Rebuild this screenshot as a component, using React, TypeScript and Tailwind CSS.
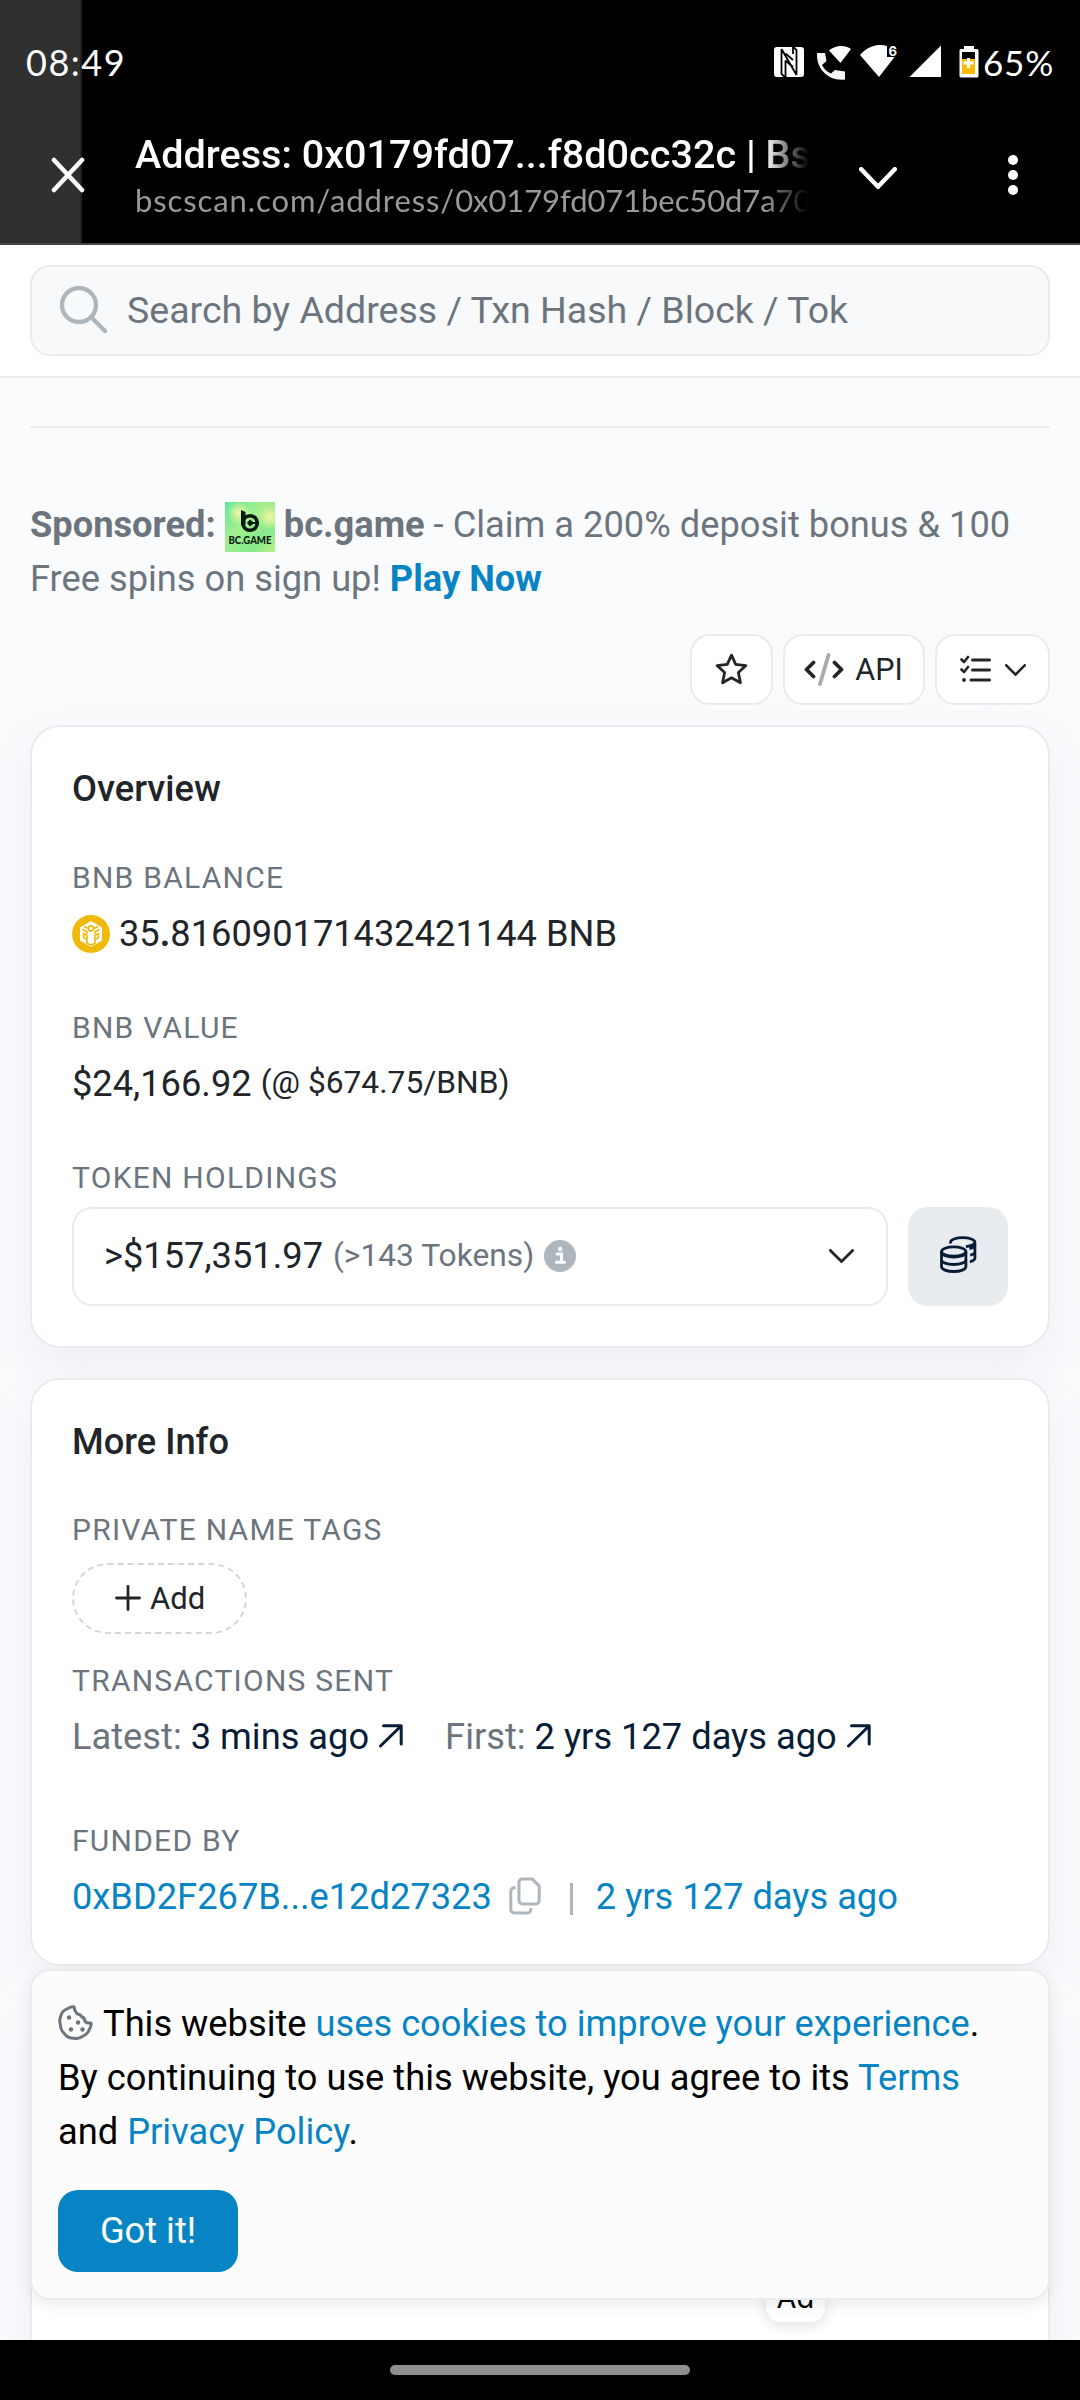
import type { ReactNode } from "react";

function Chevron({ w, h, sw }: { w: number; h: number; sw: number }) {
  return (
    <svg width={w} height={h} viewBox={`0 0 ${w} ${h}`} fill="none" stroke="currentColor" strokeWidth={sw} strokeLinecap="round" strokeLinejoin="round">
      <path d={`M${sw / 2} ${sw / 2}L${w / 2} ${h - sw / 2}L${w - sw / 2} ${sw / 2}`} />
    </svg>
  );
}

function StatusIcons() {
  return (
    <svg width="212" height="42" viewBox="770 42 212 42" className="shrink-0">
      <rect x="774" y="48" width="30" height="30" rx="3" fill="#fff" />
      <path d="M781.500 50V75L784.500 78M796.500 76V51L793.500 48M781.500 50L796.500 76M785.500 61.500L793 68M785.500 61.500V78M793 55V48M785.500 54.500L793 61" fill="none" stroke="#000" strokeWidth="1.800" />
      <path d="M817 54h8l1.500 8-4.500 4c2 4 5 7 9 8.500l4-3.500 10 1.500v8c-16 2-29-10-28-26.500z" fill="#f4f4f4" />
      <path d="M829 51.500C835 46 845 45.500 851 50L840.500 64z" fill="#fff" />
      <path d="M860 56C869 45.500 880 44.800 887 47V58H894.500L879 78z" fill="#fff" />
      <text x="888.500" y="56.500" fill="#fff" fontFamily="Inter" fontWeight="700" fontSize="13">6</text>
      <path d="M909.500 78L941 46.500V78z" fill="#fff" />
      <path d="M964 47h10v3h3q1.500 0 1.500 1.500V77q0 1.500-1.500 1.500H961q-1.500 0-1.500-1.500V51.500q0-1.500 1.500-1.500h3z" fill="#fff" />
      <path d="M962 53h13v22h-13z" fill="#fbbc04" />
      <path d="M962 53h13v7h-13z" fill="#000" />
      <path d="M968.500 59v10M963.500 64h10" stroke="#fff" strokeWidth="3.200" />
    </svg>
  );
}

function BcGame() {
  return (
    <svg width="50" height="50" viewBox="0 0 50 50" className="mt-[4px] shrink-0">
      <defs>
        <linearGradient id="bcg" x1="0" y1="0" x2="1" y2="1">
          <stop offset="0" stopColor="#5fe89a" />
          <stop offset=".4" stopColor="#a3ee8e" />
          <stop offset=".75" stopColor="#86ea8c" />
          <stop offset="1" stopColor="#c0f08a" />
        </linearGradient>
        <radialGradient id="glow">
          <stop offset="0" stopColor="#f4f6a2" />
          <stop offset="1" stopColor="#f4f6a2" stopOpacity="0" />
        </radialGradient>
      </defs>
      <rect width="50" height="50" fill="url(#bcg)" />
      <circle cx="14" cy="11" r="12" fill="url(#glow)" />
      <circle cx="45" cy="15" r="13" fill="url(#glow)" />
      <path d="M16 8l4.500 2v13H16z" fill="#0b1a10" />
      <circle cx="25" cy="21" r="7.300" fill="none" stroke="#0b1a10" strokeWidth="3.600" />
      <path d="M25 17.500l3 2.500h4v2h-4l-3 2.500-3-3.500z" fill="#0b1a10" />
      <text x="25" y="41.500" textAnchor="middle" textLength="43" lengthAdjust="spacingAndGlyphs" fill="#0b1a10" fontFamily="Lato" fontWeight="900" fontSize="10.500">BC.GAME</text>
    </svg>
  );
}

function BnbIcon() {
  return (
    <svg width="38" height="38" viewBox="0 0 38 38" className="shrink-0">
      <circle cx="19" cy="19" r="19" fill="#f0b90b" />
      <path d="M19 6L30 12.500V25.500L19 32L8 25.500V12.500z" fill="#fff" />
      <g fill="none" stroke="#f0b90b" strokeWidth="1.600" strokeLinejoin="round">
        <circle cx="19" cy="13.500" r="2.600" />
        <path d="M12 11.500L16.500 13.500M26 11.500L21.500 13.500M10.500 14L15 17V19M27.500 14L23 17V19" />
        <path d="M11.500 18.500l3.500 2v4l-3.500-2zM26.500 18.500l-3.500 2v4l3.500-2zM15 25v4M23 25v4M15.500 28.500l3.500 1.500 3.500-1.500" />
      </g>
    </svg>
  );
}

function ArrowUpRight() {
  return (
    <svg width="24" height="24" viewBox="0 0 24 24" fill="none" stroke="currentColor" strokeWidth="3" strokeLinecap="round" strokeLinejoin="round">
      <path d="M1.500 22L22 2M4.500 1.800H22.200V20" />
    </svg>
  );
}

function Coins() {
  return (
    <svg width="37" height="38" viewBox="0 0 37 38" fill="none" stroke="#081d35" strokeWidth="2.800">
      <ellipse cx="13.700" cy="15.500" rx="12.200" ry="4.600" />
      <path d="M1.500 15.500v15c0 2.900 5.400 5 12.200 5s12.200-2.100 12.200-5v-15" />
      <path d="M1.500 16.500c0 2.500 5.400 4.500 12.200 4.500s12.200-2 12.200-4.500M1.500 24c0 2.500 5.400 4.500 12.200 4.500s12.200-2 12.200-4.500" />
      <path d="M10.500 7.500V6.300c0-2.700 5.400-4.700 12.200-4.700s12.200 2 12.200 4.700v16c0 1.500-2 2.700-5 3.500M34.900 6.300c0 2.200-3.800 3.900-9 4.300M34.900 10c-.5 1.200-2.500 2-5.500 2.600M34.900 16.500c-.5 1.200-2.200 2-4.700 2.600" />
    </svg>
  );
}

function CopyIcon() {
  return (
    <svg width="32" height="38" viewBox="0 0 32 38" fill="none" stroke="#adb5bd" strokeWidth="3" strokeLinejoin="round">
      <path d="M13.500 1.900h9.500l7.200 7v14.500a3.500 3.500 0 0 1-3.500 3.500H13.500a3.500 3.500 0 0 1-3.500-3.500V5.400a3.500 3.500 0 0 1 3.500-3.500z" />
      <path d="M6.500 10.800H5.300a3.500 3.500 0 0 0-3.500 3.500v18.200a3.500 3.500 0 0 0 3.500 3.500h13a3.500 3.500 0 0 0 3.500-3.500v-1.500" />
    </svg>
  );
}

function Cookie() {
  return (
    <svg width="35" height="35" viewBox="0 0 35 35" className="-mt-[4px] shrink-0" fill="none" stroke="#6c757d" strokeWidth="3" strokeLinejoin="round">
      <path d="M16 1.800Q13 1.500 10.300 3.200L6.500 5.300Q4.300 6.600 3.500 9L2.200 13Q1.500 15.500 2 18L2.900 23Q3.500 25.500 5.300 27.500L8.500 31Q10.500 32.700 13 33L18 33.500Q20.500 33.600 22.500 32.500L27 30Q29.300 28.700 30.300 26.500L32.300 22.500Q33.200 20.500 33 18Q28.500 18.500 27 16.500Q26.800 13 24 12Q22 9 19 8.700Q16.500 6 16 1.800z" />
      <g fill="#6c757d" stroke="none">
        <circle cx="11" cy="12.500" r="2.200" />
        <circle cx="20" cy="17.500" r="2.200" />
        <circle cx="13" cy="24.500" r="2.200" />
        <circle cx="24.500" cy="24.500" r="2.200" />
      </g>
    </svg>
  );
}

function Label({ children, mt }: { children: ReactNode; mt: string }) {
  return <div className={`${mt} h-[45px] text-[30px] leading-[45px] tracking-[1.25px] text-[#6c757d]`}>{children}</div>;
}

const btn = "flex h-[71px] items-center justify-center rounded-[20px] border-2 border-[#e9ecef] bg-white";

export default function App() {
  return (
    <div className="relative flex h-[2400px] w-[1080px] flex-col overflow-hidden bg-[#fafbfd] font-['Roboto',sans-serif] text-[36.25px] leading-[54px] text-[#212529]">
      <header className="h-[245px] shrink-0 border-b-2 border-[#454345] bg-[linear-gradient(90deg,#303030_0,#303030_80px,#222_80px,#222_82px,#000_82px)] text-white">
        <div className="flex h-[123px] items-center justify-between pl-[26px] pr-[26px]">
          <span className="font-['Lato',sans-serif] text-[36px] tracking-[1.5px]">08:49</span>
          <span className="flex items-center">
            <StatusIcons />
            <span className="ml-[1px] font-['Lato',sans-serif] text-[35px] tracking-[0.8px]">65%</span>
          </span>
        </div>
        <div className="flex h-[120px] pl-[51px]">
          <svg width="34" height="36" viewBox="0 0 34 36" className="mt-[34px]" stroke="#fff" strokeWidth="4.500" strokeLinecap="round">
            <path d="M3 3L31 33M31 3L3 33" />
          </svg>
          <div className="ml-[50px] mt-[5px] w-[674px] whitespace-nowrap [mask-image:linear-gradient(90deg,#000_630px,transparent_674px)]">
            <div className="text-[39.6px] font-medium leading-[54px]">Address: 0x0179fd07...f8d0cc32c | Bs</div>
            <div className="font-['Lato',sans-serif] text-[31px] leading-[37px] text-[#999]"><span className="tracking-[0.9px]">bscscan.com/address/</span><span className="tracking-[-0.1px]">0x0179fd071bec50d7a70</span></div>
          </div>
          <span className="ml-[50px] mt-[44px]"><Chevron w={38} h={22} sw={4.5} /></span>
          <div className="ml-[111px] mt-[32px] flex flex-col gap-[5px]">
            <i className="size-[10px] rounded-full bg-white" />
            <i className="size-[10px] rounded-full bg-white" />
            <i className="size-[10px] rounded-full bg-white" />
          </div>
        </div>
      </header>

      <div className="h-[133px] shrink-0 border-b-2 border-[#e9ecef] bg-white px-[30px] pt-5">
        <div className="flex h-[91px] items-center rounded-[20px] border-2 border-[#e9ecef] bg-[#f8f9fa] pl-[28px] text-[#6c757d]">
          <svg width="48" height="48" viewBox="0 0 48 48" fill="none" stroke="#adb5bd" strokeWidth="4.300" strokeLinecap="round" className="-mt-[2px]">
            <circle cx="19" cy="19" r="17" />
            <path d="M31.500 31.500L45 45" />
          </svg>
          <span className="-mt-[2px] ml-[19px] text-[37.5px]">Search by Address / Txn Hash / Block / Tok</span>
        </div>
      </div>

      <main className="px-[30px] pt-12">
        <hr className="h-[2px] border-0 bg-[#e9ecef]" />
        <div className="mt-[70px] text-[#6c757d]">
          <div className="flex h-[54px] items-center whitespace-pre">
            <b>Sponsored: </b><BcGame /><b> bc.game</b> - Claim a 200% deposit bonus &amp; 100
          </div>
          <div className="h-[54px]">Free spins on sign up! <b className="text-[#0784c3]">Play Now</b></div>
        </div>
        <div className="mt-[28px] flex justify-end gap-[10px] text-[30.500px]">
          <div className={`${btn} w-[83px]`}>
            <svg width="33" height="33" viewBox="0 0 33 33" fill="none" stroke="#212529" strokeWidth="2.800" strokeLinejoin="round">
              <path d="M16.500 2.200l4.200 9.200 10.200 1.200-7.500 7 2 10.200-8.900-5-8.900 5 2-10.200-7.500-7 10.200-1.200z" />
            </svg>
          </div>
          <div className={`${btn} w-[142px] gap-[11px] pr-[1px]`}>
            <svg width="40" height="33" viewBox="0 0 40 33" fill="none" stroke="#212529" strokeWidth="3.800" strokeLinecap="round" strokeLinejoin="round">
              <path d="M9.500 9.500L2.500 16.500l7 7M30.500 9.500l7 7-7 7" />
              <path d="M24.500 2L16 31" stroke="#a9aaac" />
            </svg>
            <span>API</span>
          </div>
          <div className={`${btn} w-[115px] gap-[14px]`}>
            <svg width="31" height="28" viewBox="0 0 31 28" fill="none" stroke="#212529" strokeWidth="3" strokeLinecap="round" strokeLinejoin="round" className="-mt-[2px]">
              <path d="M12.500 5H29.500M12.500 15H29.500M11 25H29.500" />
              <path d="M1.500 4.500L4 7l4-5M1.500 14.500L4 17l4-5" strokeWidth="2.600" />
              <circle cx="4" cy="25" r="1.900" fill="#212529" stroke="none" />
            </svg>
            <Chevron w={21} h={12} sw={2.6} />
          </div>
        </div>

        <section className="mt-5 h-[623px] rounded-[30px] border-2 border-[#e9ecef] bg-white px-10 pt-[35px] shadow-[0_20px_48px_rgba(189,197,209,0.2)]">
          <h2 className="h-[54px] font-medium">Overview</h2>
          <Label mt="mt-[39px]">BNB BALANCE</Label>
          <div className="mt-[7px] flex h-[54px] items-center gap-[9px]">
            <BnbIcon />
            <span>35<b>.</b>816090171432421144 BNB</span>
          </div>
          <Label mt="mt-[44px]">BNB VALUE</Label>
          <div className="mt-[7px] flex h-[54px] gap-[9px]">
            <span>$24,166.92</span>
            <span className="text-[31.72px] leading-[52px]">(@ $674.75/BNB)</span>
          </div>
          <Label mt="mt-[44px]">TOKEN HOLDINGS</Label>
          <div className="mt-[7px] flex h-[99px] gap-5">
            <div className="flex w-[816px] items-center rounded-[20px] border-2 border-[#e9ecef] pb-[2px] pl-[30px] pr-[32px]">
              <span>&gt;$157,351.97</span>
              <span className="ml-[10px] text-[31.72px] text-[#6c757d]">(&gt;143 Tokens)</span>
              <svg width="32" height="32" viewBox="0 0 32 32" className="ml-[10px]">
                <circle cx="16" cy="16" r="16" fill="#adb5bd" />
                <path d="M13 14h4.500v8M12.500 22.300h8" stroke="#fff" strokeWidth="3" fill="none" strokeLinecap="round" />
                <circle cx="16.200" cy="9" r="2.200" fill="#fff" />
              </svg>
              <span className="ml-auto"><Chevron w={25} h={14} sw={2.8} /></span>
            </div>
            <div className="flex w-[100px] items-center justify-center rounded-[20px] bg-[#e9ecef] pb-[4px]"><Coins /></div>
          </div>
        </section>

        <section className="mt-[30px] h-[588px] rounded-[30px] border-2 border-[#e9ecef] bg-white px-10 pt-[35px] shadow-[0_20px_48px_rgba(189,197,209,0.2)]">
          <h2 className="h-[54px] font-medium">More Info</h2>
          <Label mt="mt-[38px]">PRIVATE NAME TAGS</Label>
          <div className="mt-[11px] flex h-[71px] w-[175px] items-center gap-[9px] rounded-full border-2 border-dashed border-[#d3d5d7] pl-[41px] text-[31px]">
            <svg width="26" height="26" viewBox="0 0 26 26" stroke="#212529" strokeWidth="2.800" strokeLinecap="round" className="-mt-[2px]"><path d="M13 1.500V24.500M1.500 13H24.500" /></svg>
            Add
          </div>
          <Label mt="mt-[24px]">TRANSACTIONS SENT</Label>
          <div className="mt-[7px] flex h-[54px] items-center text-[#6c757d]">
            Latest:<span className="ml-[9px] text-[#081d35]">3 mins ago</span>
            <span className="-mt-[3px] ml-[10px] text-[#081d35]"><ArrowUpRight /></span>
            <span className="ml-[42px]">First:</span><span className="ml-[9px] text-[#081d35]">2 yrs 127 days ago</span>
            <span className="-mt-[3px] ml-[10px] text-[#081d35]"><ArrowUpRight /></span>
          </div>
          <Label mt="mt-[54px]">FUNDED BY</Label>
          <div className="mt-[7px] flex h-[54px] items-center text-[#0784c3]">
            <span>0xBD2F267B...e12d27323</span>
            <span className="-mt-[3px] ml-[17px]"><CopyIcon /></span>
            <span className="mt-[4px] ml-[29px] h-[32px] w-[3px] bg-[#adb5bd]" />
            <span className="ml-[23px]">2 yrs 127 days ago</span>
          </div>
        </section>

        <section className="mt-[30px] flex h-[500px] justify-end rounded-[30px] border-2 border-[#e9ecef] bg-white pr-[223px] pt-[272px] shadow-[0_20px_48px_rgba(189,197,209,0.2)]">
          <span className="flex h-[52px] w-[59px] items-center justify-center rounded-[14px] bg-white pt-[4px] font-['Inter',sans-serif] text-[29px] text-black shadow-[0_4px_14px_rgba(0,0,0,0.12)]">Ad</span>
        </section>
      </main>

      <div className="absolute left-[30px] top-[1969px] h-[331px] w-[1020px] rounded-[20px] border-2 border-[#e9ecef] bg-[#fcfcfc] px-[26px] pt-[26px] text-black shadow-[0_5px_15px_rgba(0,0,0,0.08)]">
        <div className="flex h-[54px] items-center whitespace-pre">
          <Cookie /><span className="ml-[10px]">This website <span className="text-[#0784c3]">uses cookies to improve your experience</span>.</span>
        </div>
        <div className="h-[54px] whitespace-nowrap">By continuing to use this website, you agree to its <span className="text-[#0784c3]">Terms</span></div>
        <div className="h-[54px]">and <span className="text-[#0784c3]">Privacy Policy</span>.</div>
        <button className="mt-[31px] flex h-[82px] w-[180px] items-center justify-center rounded-[20px] bg-[#0784c3] text-white">Got it!</button>
      </div>

      <footer className="absolute bottom-0 left-0 flex h-[60px] w-full justify-center bg-black pt-[25px]">
        <div className="h-[10px] w-[300px] rounded-full bg-[#8f8f8f]" />
      </footer>
    </div>
  );
}
